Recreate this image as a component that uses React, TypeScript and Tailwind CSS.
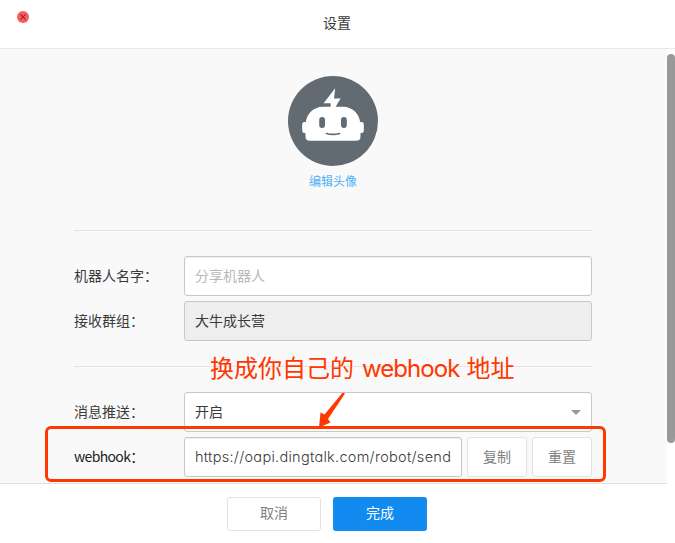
import type { ReactNode } from "react";

function Row({ label, children }: { label: ReactNode; children: ReactNode }) {
  return (
    <div className="flex h-10 items-center">
      <div className="w-[110px] shrink-0 pb-0.5 whitespace-nowrap">{label}</div>
      {children}
    </div>
  );
}

function Avatar() {
  return (
    <svg width="90" height="90" viewBox="0 0 90 90" className="block">
      <circle cx="45" cy="45" r="45" fill="#636b72" />
      <path
        fill="#fff"
        d="M47.2 12.3 35.6 27.2H42.6V30.7H35C26 30.7 19.2 37 17.8 46H16.5Q14.2 46 14.2 48.3V54.7Q14.2 57 16.5 57H17.5V60.5Q17.5 64.8 21.8 64.8H68.2Q72.5 64.8 72.5 60.5V57H73.5Q75.8 57 75.8 54.7V48.3Q75.8 46 73.5 46H72.2C70.8 37 64 30.7 55 30.7H47.6L52.6 22.5H46Z"
      />
      <rect x="31.2" y="41" width="5.8" height="11" rx="2.9" fill="#636b72" />
      <rect x="53" y="41" width="5.8" height="11" rx="2.9" fill="#636b72" />
      <path d="M38.5 57.5Q45 59.3 51.5 57.5" fill="none" stroke="#636b72" strokeWidth="1.7" strokeLinecap="round" />
    </svg>
  );
}

export default function App() {
  return (
    <div className="relative flex h-[543px] w-[675px] flex-col overflow-hidden bg-white font-['Noto_Sans_CJK_SC',sans-serif] text-sm leading-5 text-[#3a3a3a]">
      <header className="flex h-[49px] shrink-0 items-center border-b border-[#e8e8e8] pl-[17px]">
        <svg width="12" height="12" viewBox="0 0 12 12" className="-mt-[15px]">
          <circle cx="6" cy="6" r="6" fill="#fc5b5f" />
          <path d="m3.4 3.4 5.2 5.2m0-5.2L3.4 8.6" stroke="#8c2b30" strokeWidth="1.1" />
        </svg>
        <h1 className="ml-[294px] pb-[5px] font-normal">设置</h1>
      </header>

      <div className="flex h-[435px] shrink-0">
        <main className="w-[667px] border-b border-[#e0e0e0] bg-[#f9f9f9] pr-[75px] pl-[74px]">
          <div className="flex h-[182px] flex-col items-center border-b border-[#e4e4e4] pt-[27px]">
            <Avatar />
            <a className="mt-1.5 text-xs leading-[18px] text-[#52b0f7]">编辑头像</a>
          </div>
          <section className="flex h-[136px] flex-col gap-[5px] border-b border-[#e4e4e4] pt-[25px]">
            <Row label="机器人名字：">
              <div className="flex h-full flex-1 items-center rounded-[3px] border border-[#c8c8c8] bg-white px-2.5 pb-0.5 text-[#b8b8b8] shadow-[inset_0_1px_1px_#eeeeee]">分享机器人</div>
            </Row>
            <Row label="接收群组：">
              <div className="flex h-full flex-1 items-center rounded-[3px] border border-[#c8c8c8] bg-[#eee] px-2.5 pb-0.5">大牛成长营</div>
            </Row>
          </section>
          <section className="flex flex-col gap-[5px] pt-[25px]">
            <Row label="消息推送：">
              <div className="flex h-full flex-1 items-center justify-between rounded-[3px] border border-[#c8c8c8] bg-white px-2.5">
                <span className="pb-0.5">开启</span>
                <svg width="10" height="5" viewBox="0 0 10 5"><path d="M0 0h10L5 5Z" fill="#999" /></svg>
              </div>
            </Row>
            <Row label={<span className="tracking-[-0.65px] text-[#222]">webhook：</span>}>
              <div className="flex h-full w-[278px] items-center rounded-[3px] border border-[#c8c8c8] bg-white px-2.5 font-['Inter',sans-serif] text-[14.5px] font-light tracking-[0.28px] whitespace-nowrap [font-feature-settings:'cv11'] shadow-[inset_0_1px_1px_#eeeeee]">https://oapi.dingtalk.com/robot/send</div>
              <button className="ml-[5px] h-full w-[60px] rounded-[3px] border border-[#e2e2e2] bg-white pb-0.5 text-[#808080]">复制</button>
              <button className="ml-[5px] h-full w-[60px] rounded-[3px] border border-[#e2e2e2] bg-white pb-0.5 text-[#808080]">重置</button>
            </Row>
          </section>
        </main>
        <div className="w-2 pt-[5px]">
          <div className="h-[389px] rounded-full bg-[#999]" />
        </div>
      </div>

      <footer className="flex gap-3 pt-[13px] pl-[227px]">
        <button className="h-[34px] w-[94px] rounded-[3px] border border-[#e2e2e2] bg-white pb-1 text-[#808080]">取消</button>
        <button className="h-[34px] w-[94px] rounded-[3px] bg-[#128bf1] pb-1 text-white">完成</button>
      </footer>

      <div className="absolute top-[426px] left-[45px] h-[56px] w-[561px] rounded-md border-[3px] border-[#ff3700]" />
      <div className="absolute top-[351px] left-[210px] text-2xl leading-8 whitespace-nowrap text-[#ff3700]">
        换成你自己的<span className="mr-[7px] ml-2 font-['Inter',sans-serif] tracking-[-0.95px]">webhook</span>地址
      </div>
      <svg width="27" height="36" viewBox="0 0 27 36" className="absolute top-[392px] left-[318px]">
        <path d="M26 1 24.5 0.8 6.5 22.5 2.5 20.5 1 35.5 12.5 30.5 10 27 27 1.5Z" fill="#ff3700" />
      </svg>
    </div>
  );
}
